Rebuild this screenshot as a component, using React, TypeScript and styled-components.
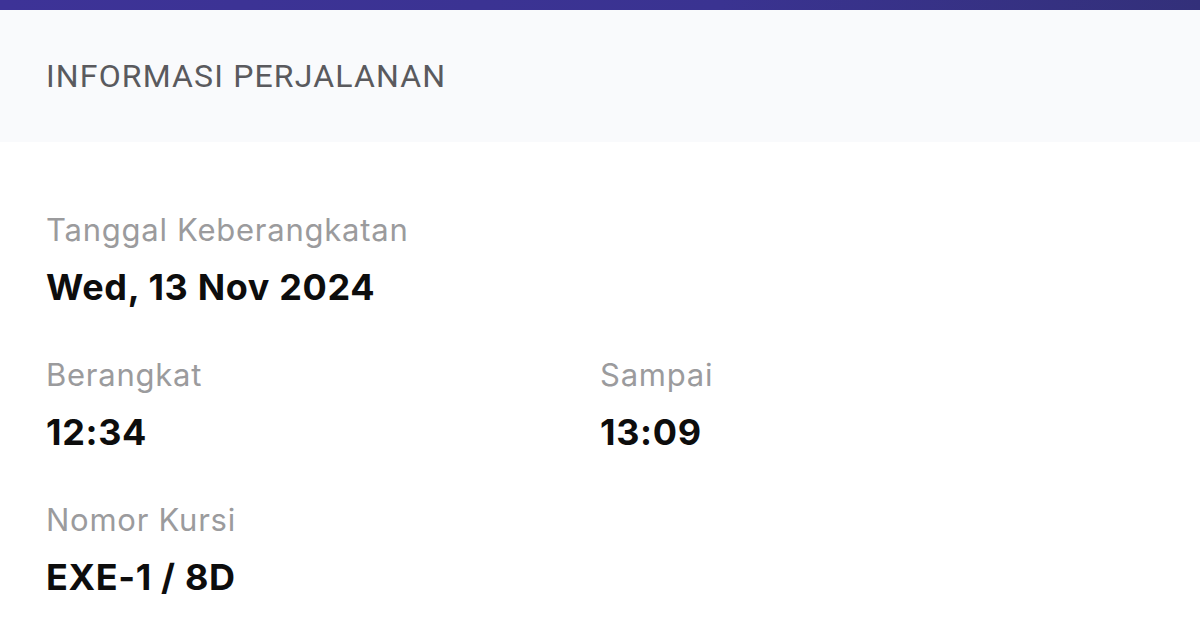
import styled, { createGlobalStyle } from 'styled-components';

const Global = createGlobalStyle`
  html, body {
    margin: 0;
    padding: 0;
    background: #ffffff;
    font-family: Inter, "Noto Sans", sans-serif;
  }
`;

const Page = styled.div`
  width: 1200px;
  height: 631px;
  overflow: hidden;
  background: #ffffff;
`;

const TopStrip = styled.div`
  height: 10px;
  background: linear-gradient(90deg, #3d3397 0%, #3a3391 60%, #33307a 100%);
`;

const SectionHeader = styled.div`
  height: 132px;
  background: #f9fafc;
  display: flex;
  align-items: center;
  padding: 0 46px;
`;

const SectionTitle = styled.h2`
  margin: 0;
  font-family: Roboto, "Noto Sans", sans-serif;
  font-weight: 400;
  font-size: 32px;
  color: #5a5a5e;
  letter-spacing: 1.15px;
`;

const Body = styled.div`
  padding: 70px 46px 0;
  display: flex;
  flex-direction: column;
  gap: 49px;
`;

const Row = styled.div`
  display: grid;
  grid-template-columns: 554px 1fr;
`;

const Field = styled.div`
  display: flex;
  flex-direction: column;
  gap: 18px;
`;

const Label = styled.span`
  font-size: 31px;
  line-height: 36px;
  letter-spacing: 0.75px;
  color: #9b9b9d;
  font-weight: 400;
`;

const Value = styled.span`
  font-size: 36px;
  line-height: 42px;
  letter-spacing: 0.65px;
  color: #0d0d0d;
  font-weight: 700;
`;

export default function App() {
  return (
    <Page>
      <Global />
      <TopStrip />
      <SectionHeader>
        <SectionTitle>INFORMASI PERJALANAN</SectionTitle>
      </SectionHeader>
      <Body>
        <Field>
          <Label>Tanggal Keberangkatan</Label>
          <Value>Wed, 13 Nov 2024</Value>
        </Field>
        <Row>
          <Field>
            <Label>Berangkat</Label>
            <Value>12:34</Value>
          </Field>
          <Field>
            <Label>Sampai</Label>
            <Value>13:09</Value>
          </Field>
        </Row>
        <Field>
          <Label>Nomor Kursi</Label>
          <Value>EXE-1 / 8D</Value>
        </Field>
      </Body>
    </Page>
  );
}
